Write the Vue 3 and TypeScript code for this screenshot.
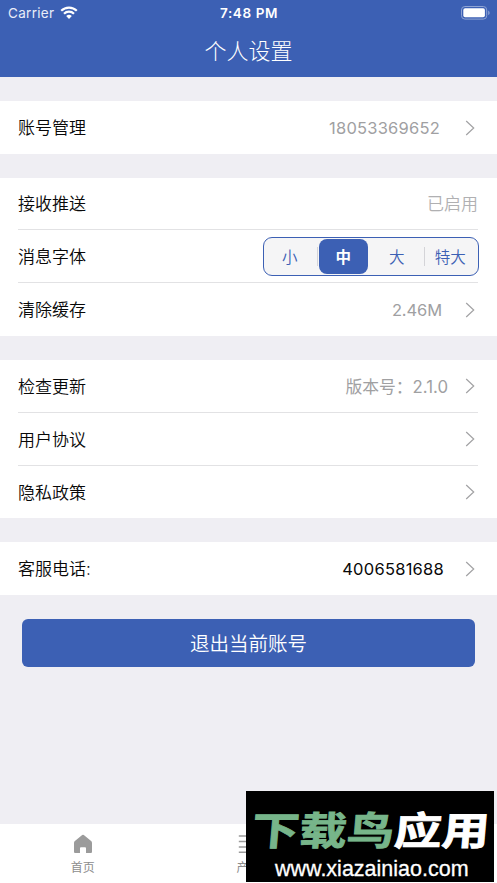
<script setup lang="ts">
import { ref } from 'vue'

interface Row {
  label: string
  value?: string
  kind?: 'number' | 'status' | 'size' | 'version' | 'phone'
  arrow?: boolean
  segmented?: boolean
}

const groups: Row[][] = [
  [{ label: '账号管理', value: '18053369652', kind: 'number', arrow: true }],
  [
    { label: '接收推送', value: '已启用', kind: 'status' },
    { label: '消息字体', segmented: true },
    { label: '清除缓存', value: '2.46M', kind: 'size', arrow: true },
  ],
  [
    { label: '检查更新', value: '版本号：2.1.0', kind: 'version', arrow: true },
    { label: '用户协议', arrow: true },
    { label: '隐私政策', arrow: true },
  ],
  [{ label: '客服电话:', value: '4006581688', kind: 'phone', arrow: true }],
]

const sizes = ['小', '中', '大', '特大']
const selected = ref(1)
</script>

<template>
  <div class="screen">
    <header class="header">
      <div class="status-bar">
        <div class="carrier">
          <span>Carrier</span>
          <svg class="wifi" viewBox="0 0 18 13" width="18" height="13">
            <path d="M1.2 4.8a11.1 11.1 0 0 1 15.6 0" />
            <path d="M4 7.7a7.1 7.1 0 0 1 10 0" />
            <path class="dot" d="M6.2 10a4 4 0 0 1 5.6 0L9 12.9Z" />
          </svg>
        </div>
        <span class="time">7:48 PM</span>
        <svg class="battery" viewBox="0 0 29 14" width="29" height="14">
          <rect x="0.5" y="0.5" width="25.2" height="12.6" rx="3.4" class="shell" />
          <rect x="2.3" y="2.3" width="21.6" height="9" rx="1.8" fill="#fff" />
          <path d="M27.2 4.6v4.5c.9-.4 1.4-1.2 1.4-2.2s-.5-1.9-1.4-2.3Z" class="cap" />
        </svg>
      </div>
      <h1>个人设置</h1>
    </header>

    <main>
      <section v-for="(group, i) in groups" :key="i" class="group">
        <div v-for="row in group" :key="row.label" class="row">
          <span class="label">{{ row.label }}</span>
          <span v-if="row.value" class="value" :class="row.kind">{{ row.value }}</span>
          <div v-if="row.segmented" class="segments">
            <button
              v-for="(s, n) in sizes"
              :key="s"
              :class="{ active: n === selected }"
              @click="selected = n"
            >{{ s }}</button>
          </div>
          <svg v-if="row.arrow" class="arrow" viewBox="0 0 10 16" width="10" height="16">
            <path d="M1.2 1 8.7 8l-7.5 7" />
          </svg>
        </div>
      </section>
      <button class="logout">退出当前账号</button>
    </main>

    <nav class="tabs">
      <div class="tab">
        <svg viewBox="0 0 20 20" width="20" height="20">
          <path d="M9.2 1.1q.8-.6 1.6 0l7.3 6q.9.7.9 1.8v9q0 1.1-1.1 1.1H13v-4.800q0-.9-.9-.9H7.900q-.9 0-.9.9V19H2.100Q1 19 1 17.900V8.900q0-1.100.9-1.800Z" fill="#9b9b9b" />
        </svg>
        <span>首页</span>
      </div>
      <div class="tab">
        <svg viewBox="0 0 20 20" width="20" height="20">
          <path d="M.8 2h18.400M.8 7.500h18.400M.8 13h18.400M.8 18.300h18.400" stroke="#9b9b9b" stroke-width="1.500" />
        </svg>
        <span>产品</span>
      </div>
      <div class="tab"></div>
    </nav>

    <div class="watermark">
      <div class="brand"><span>下载鸟</span><b>应用</b></div>
      <div class="site">www.xiazainiao.com</div>
    </div>
  </div>
</template>

<style>
body {
  background: #efeef3;
}
</style>

<style scoped>
.screen {
  position: relative;
  display: flex;
  flex-direction: column;
  height: 883px;
  overflow: hidden;
  background: #efeef3;
  font-family: Inter, 'Noto Sans CJK SC', sans-serif;
  color: #080808;
}
.screen * {
  box-sizing: border-box;
}
.header {
  height: 77px;
  flex: none;
  background: #3c60b4;
  color: #fff;
}
.status-bar {
  display: grid;
  grid-template-columns: 1fr auto 1fr;
  align-items: center;
  height: 26px;
  padding: 0 7px 0 8px;
  font-size: 13.500px;
}
.carrier {
  display: flex;
  align-items: center;
  gap: 6px;
  color: #e9edf8;
  letter-spacing: 0.3px;
}
.wifi {
  margin-top: -2px;
}
.wifi path {
  fill: none;
  stroke: #fff;
  stroke-width: 2.200;
}
.wifi .dot {
  fill: #fff;
  stroke: none;
}
.time {
  font-weight: 600;
  letter-spacing: 0.6px;
}
.battery {
  justify-self: end;
  margin-top: -1px;
}
.shell {
  fill: none;
  stroke: #8fa4d4;
}
.cap {
  fill: #8fa4d4;
}
h1 {
  margin: 0;
  font-size: 22px;
  line-height: 51px;
  font-weight: 300;
  text-align: center;
}
main {
  flex: 1;
  padding-top: 24px;
}
.group {
  background: #fff;
  padding: 0 19px 0 18px;
  margin-bottom: 24px;
}
.row {
  display: flex;
  align-items: center;
  height: 53px;
}
.group .row:not(:last-child) {
  border-bottom: 1px solid #e2e2e4;
}
.group:nth-child(2) .row:first-child {
  height: 52px;
}
.group:nth-child(3) .row:last-child {
  height: 52px;
}
.label {
  flex: 1;
  padding-bottom: 2px;
  font-size: 17px;
  font-weight: 350;
}
.value {
  font-size: 16.500px;
  color: #a0a0a2;
}
.number {
  margin-right: 25px;
  letter-spacing: 0.22px;
}
.status {
  padding-bottom: 2px;
  font-size: 17px;
  font-weight: 350;
  color: #b0b0b2;
}
.size {
  margin-right: 23px;
  letter-spacing: -0.1px;
}
.version {
  margin-right: 17px;
  font-size: 16.800px;
}
.phone {
  margin-right: 21px;
  letter-spacing: 0.25px;
  color: #080808;
}
.arrow {
  margin-right: 3px;
}
.arrow path {
  fill: none;
  stroke: #a2a2a4;
  stroke-width: 1.200;
}
.segments {
  display: grid;
  grid-template-columns: repeat(4, 1fr);
  width: 216px;
  height: 39px;
  margin-right: -1px;
  padding: 1px 0;
  border: 1.500px solid #3c60b4;
  border-radius: 9px;
  background: #f5f5f6;
}
button {
  border: 0;
  padding: 0;
  background: none;
  font-family: inherit;
}
.segments button {
  padding-right: 2px;
  color: #3c60b4;
  font-size: 15.500px;
  font-weight: 350;
  background: linear-gradient(#d4d4d8, #d4d4d8) right center / 1px 19px no-repeat;
}
.segments button:last-child {
  background: none;
}
.segments .active {
  margin: 0 3px 0 1px;
  padding-right: 0;
  background: #3c60b4;
  border-radius: 8px;
  color: #fff;
  font-weight: 700;
}
.logout {
  display: block;
  width: 453px;
  height: 48px;
  margin-left: 22px;
  padding-bottom: 2px;
  border-radius: 6px;
  background: #3c60b4;
  color: #fff;
  font-size: 19.500px;
  font-weight: 350;
}
.tabs {
  display: grid;
  grid-template-columns: repeat(3, 1fr);
  height: 59px;
  background: #fff;
}
.tab {
  display: flex;
  flex-direction: column;
  align-items: center;
  padding-top: 10px;
  font-size: 12px;
  line-height: 18px;
  color: #8d8d8d;
}
.tab span {
  margin-top: 5px;
}
.watermark {
  position: absolute;
  left: 246px;
  top: 791px;
  width: 248px;
  height: 91px;
  background: #000;
  overflow: hidden;
  white-space: nowrap;
}
.brand {
  margin-top: 15px;
  padding-left: 6px;
  height: 50px;
  line-height: 50px;
  font-size: 47.500px;
  font-weight: 700;
  color: #fff;
  transform: scaleY(0.82) skewX(-4deg);
  -webkit-text-stroke: 1px currentColor;
}
.brand span {
  color: #77b58a;
}
.brand b {
  font-weight: 700;
}
.site {
  padding: 1px 0 0 29px;
  font-family: 'Liberation Sans', sans-serif;
  font-size: 21.500px;
  line-height: 25px;
  color: #fff;
  -webkit-text-stroke: 0.300px #fff;
}
</style>
